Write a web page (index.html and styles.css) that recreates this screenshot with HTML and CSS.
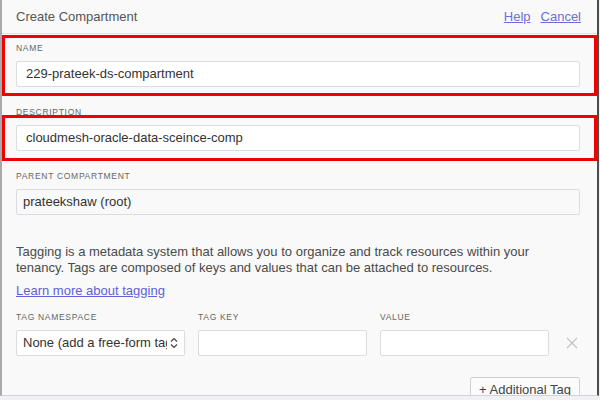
FILE: index.html
```html
<!DOCTYPE html>
<html>
<head>
<meta charset="utf-8">
<link rel="stylesheet" href="styles.css">
</head>
<body>
<div class="panel">
  <header class="head">
    <span class="title">Create Compartment</span>
    <nav class="links"><a href="#">Help</a><a href="#">Cancel</a></nav>
  </header>
  <div class="body">
    <div class="field">
      <div class="label">Name</div>
      <div class="input">229-prateek-ds-compartment</div>
    </div>
    <div class="field">
      <div class="label">Description</div>
      <div class="input">cloudmesh-oracle-data-sceince-comp</div>
    </div>
    <div class="field">
      <div class="label">Parent Compartment</div>
      <div class="input input-muted">prateekshaw (root)</div>
    </div>
    <p class="note">Tagging is a metadata system that allows you to organize and track resources within your tenancy. Tags are composed of keys and values that can be attached to resources.</p>
    <a class="learn" href="#">Learn more about tagging</a>
    <div class="tags">
      <div class="tagcol">
        <div class="label">Tag Namespace</div>
        <div class="input select"><span class="seltext">None (add a free-form tag)</span>
          <svg class="chev" width="8" height="12" viewBox="0 0 8 12"><path d="M1 4.5 L4 1.5 L7 4.5 M1 7.5 L4 10.5 L7 7.5" fill="none" stroke="#444" stroke-width="1.2"/></svg>
        </div>
      </div>
      <div class="tagcol">
        <div class="label">Tag Key</div>
        <div class="input"></div>
      </div>
      <div class="tagcol">
        <div class="label">Value</div>
        <div class="input"></div>
      </div>
      <svg class="close" width="12" height="12" viewBox="0 0 12 12"><path d="M1 1 L11 11 M11 1 L1 11" stroke="#c4c4c4" stroke-width="1.2"/></svg>
    </div>
    <div class="actions"><button class="btn">+ Additional Tag</button></div>
  </div>
  <div class="mark mark-name"></div>
  <div class="mark mark-desc"></div>
</div>
</body>
</html>
```
FILE: styles.css
```css
* { box-sizing: border-box; }
html, body { margin: 0; padding: 0; }
body {
  background: #f1f1f3;
  font-family: "Liberation Sans", Arial, sans-serif;
  width: 600px;
  height: 400px;
  overflow: hidden;
}
.panel {
  position: relative;
  width: 599px;
  height: 396px;
  background: #f9f9f9;
  border-left: 2px solid #a9a9a9;
  border-right: 2px solid #4d4d4d;
  border-bottom: 1px solid #d2d2da;
  overflow: hidden;
}
.head {
  height: 34px;
  padding: 0 16px 0 14px;
  display: flex;
  align-items: center;
  justify-content: space-between;
  border-bottom: 1px solid #e4e4e4;
}
.title { font-size: 13px; color: #555; }
.links { display: flex; gap: 10px; font-size: 13px; }
.links a { color: #6d6dd9; text-decoration: underline; }
.body { padding: 9px 17px 0 14px; }
.field { margin-bottom: 20px; }
.label {
  font-size: 8.5px;
  line-height: 10px;
  letter-spacing: 0.7px;
  text-transform: uppercase;
  color: #666;
  margin-bottom: 8px;
  white-space: nowrap;
}
.input {
  height: 26px;
  border: 1px solid #dcdce0;
  border-radius: 2px;
  background: #fff;
  padding: 0 9px;
  font-size: 13px;
  line-height: 24px;
  color: #333;
}
.input-muted { background: #f9f9f9; padding: 0 6px; }
.note {
  margin: 29px 0 0;
  font-size: 13px;
  line-height: 16px;
  color: #4a4a4a;
}
.learn {
  display: block;
  margin-top: 7px;
  font-size: 13px;
  line-height: 16px;
  color: #5f5fd8;
  text-decoration: underline;
  width: max-content;
}
.tags {
  margin-top: 13px;
  display: flex;
  align-items: flex-end;
  gap: 13px;
}
.tagcol { width: 169px; }
.select { display: flex; align-items: center; padding: 0 6px; }
.seltext { flex: 1; overflow: hidden; white-space: nowrap; }
.chev { margin-left: 3px; flex: none; }
.close { margin: 0 0 7px 4px; flex: none; }
.actions { display: flex; justify-content: flex-end; margin-top: 21px; }
.btn {
  height: 24px;
  padding: 0 8px;
  border: 1px solid #cfcfd4;
  border-radius: 2px;
  background: #fbfbfb;
  font-family: inherit;
  font-size: 13px;
  color: #444;
}
.mark {
  position: absolute;
  left: 0;
  width: 595px;
  border: 3px solid #f00000;
}
.mark-name { top: 35px; height: 61px; }
.mark-desc { top: 115px; height: 46px; }
```
